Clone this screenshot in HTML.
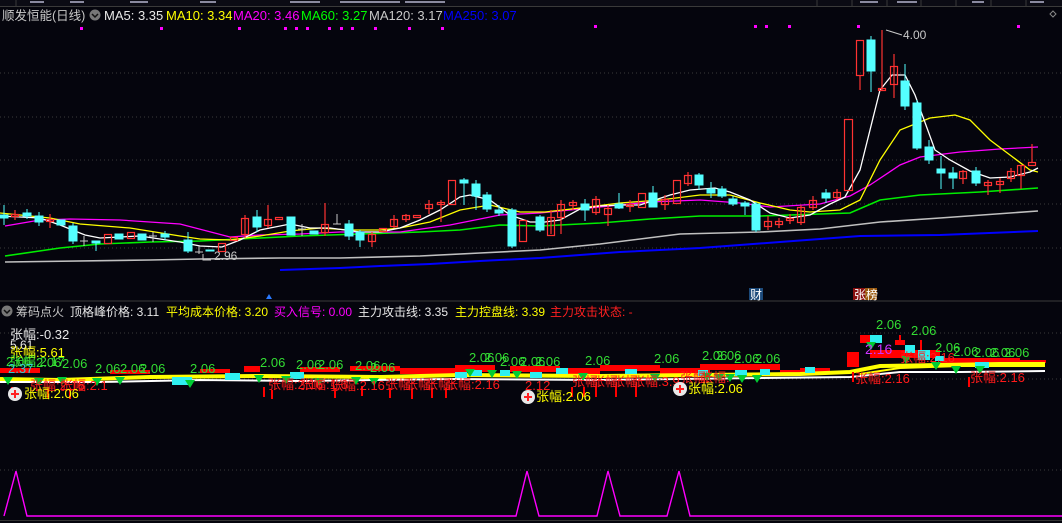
<!DOCTYPE html>
<html><head><meta charset="utf-8"><style>
html,body{margin:0;padding:0;background:#05050d;width:1062px;height:523px;overflow:hidden}
svg{display:block}
text{font-family:"Liberation Sans","Noto Sans CJK SC",sans-serif}
</style></head><body>
<svg width="1062" height="523" viewBox="0 0 1062 523" xmlns="http://www.w3.org/2000/svg">
<rect width="1062" height="523" fill="#05050d"/>
<rect x="0" y="0" width="1062" height="6" fill="#0b0b14"/>
<line x1="0" y1="6.5" x2="1062" y2="6.5" stroke="#3a3a3a"/>
<g stroke="#3a3a3a"><line x1="16" y1="0" x2="16" y2="6"/><line x1="817" y1="0" x2="817" y2="6"/><line x1="852" y1="0" x2="852" y2="6"/><line x1="887" y1="0" x2="887" y2="6"/><line x1="921" y1="0" x2="921" y2="6"/><line x1="956" y1="0" x2="956" y2="6"/><line x1="991" y1="0" x2="991" y2="6"/><line x1="1026" y1="0" x2="1026" y2="6"/></g>
<g fill="#8a8aa0"><rect x="30" y="1" width="14" height="2"/><rect x="70" y="1" width="14" height="2"/><rect x="130" y="1" width="18" height="2"/><rect x="200" y="1" width="16" height="2"/><rect x="290" y="1" width="30" height="2"/><rect x="340" y="1" width="60" height="2"/><rect x="405" y="1" width="40" height="2"/><rect x="860" y="1" width="18" height="2"/><rect x="897" y="1" width="20" height="2"/><rect x="972" y="1" width="12" height="2"/><rect x="1030" y="1" width="14" height="2"/></g>
<path d="M1053 11 l3 3 -3 3 -3 -3z" fill="none" stroke="#888"/>

<text x="2" y="20" font-size="12.5" fill="#c8c8c8">顺发恒能(日线)</text>
<circle cx="95" cy="15" r="5.5" fill="#777"/><path d="M92 14 l3 3 3-3" stroke="#111" stroke-width="1.5" fill="none"/>
<text x="104" y="20" font-size="13" fill="#e8e8e8">MA5: 3.35</text>
<text x="166" y="20" font-size="13" fill="#ffff00">MA10: 3.34</text>
<text x="233" y="20" font-size="13" fill="#ff00ff">MA20: 3.46</text>
<text x="301" y="20" font-size="13" fill="#00ff00">MA60: 3.27</text>
<text x="369" y="20" font-size="13" fill="#c8c8c8">MA120: 3.17</text>
<text x="443" y="20" font-size="13" fill="#0000ff">MA250: 3.07</text>
<g fill="#ff00ff"><rect x="80" y="27" width="3" height="3"/><rect x="160" y="27" width="3" height="3"/><rect x="238" y="27" width="3" height="3"/><rect x="284" y="27" width="3" height="3"/><rect x="295" y="27" width="3" height="3"/><rect x="306" y="27" width="3" height="3"/><rect x="328" y="27" width="3" height="3"/><rect x="340" y="27" width="3" height="3"/><rect x="351" y="27" width="3" height="3"/><rect x="374" y="27" width="3" height="3"/><rect x="408" y="27" width="3" height="3"/><rect x="441" y="27" width="3" height="3"/><rect x="594" y="25" width="3" height="3"/><rect x="754" y="25" width="3" height="3"/><rect x="765" y="25" width="3" height="3"/><rect x="788" y="25" width="3" height="3"/><rect x="857" y="25" width="3" height="3"/><rect x="1017" y="25" width="3" height="3"/></g>

<g stroke="#3a3a3a" stroke-dasharray="1 3"><line x1="0" y1="73" x2="1062" y2="73"/><line x1="0" y1="117" x2="1062" y2="117"/><line x1="0" y1="160" x2="1062" y2="160"/><line x1="0" y1="204" x2="1062" y2="204"/><line x1="0" y1="248" x2="1062" y2="248"/><line x1="0" y1="333" x2="1062" y2="333"/><line x1="0" y1="379" x2="1062" y2="379"/><line x1="0" y1="470" x2="1062" y2="470"/></g>

<g fill="none" stroke-width="1.3">
<polyline stroke="#0000ff" stroke-width="2" points="280,270 340,268 380,266 430,264 480,261 540,258 620,252 700,248 780,242 860,236 940,235 1038,231"/>
<polyline stroke="#c0c0c0" stroke-width="1.6" points="5,262 150,260 200,259 280,258 340,258 420,256 480,253 540,250 600,244 680,234 760,232 820,229 880,222 940,218 1038,211"/>
<polyline stroke="#00ee00" stroke-width="1.6" points="5,256 60,248 100,244 150,242 200,241 240,239 300,236 360,234 420,232 460,230 500,225 540,226 600,223 650,219 700,216 760,216 820,214 850,213 880,200 920,195 980,192 1038,188"/>
<polyline stroke="#ff00ff" points="5,226 40,220 70,219 120,220 180,224 230,237 260,235 300,234 340,232 400,232 450,225 500,215 540,213 560,211 600,207 650,202 700,200 740,203 770,207 820,204 850,196 870,185 900,165 920,157 960,152 1000,149 1038,147"/>
<polyline stroke="#ffff00" points="0,213 50,218 80,224 130,228 180,236 200,239 230,240 260,236 290,231 320,228 350,230 380,230 400,228 430,222 460,210 490,205 520,212 545,212 580,208 620,203 660,200 700,195 730,195 760,203 790,210 810,212 840,210 860,200 880,160 900,130 930,118 955,115 970,120 990,140 1010,155 1030,170 1038,172"/>
<polyline stroke="#ffffff" points="0,216 40,218 60,225 85,235 100,238 140,236 180,242 200,246 222,247 240,240 260,230 290,224 310,228 330,228 360,232 380,232 400,228 420,220 440,210 460,197 470,195 490,200 510,215 530,222 545,222 560,220 580,209 600,206 620,205 640,205 670,195 690,190 715,188 730,192 750,200 770,213 790,218 810,215 830,204 845,197 860,170 880,90 892,75 905,75 915,95 935,150 950,160 970,171 990,178 1010,177 1030,172 1038,168"/>
</g>

<g fill="#54ffff" stroke="#54ffff">
<line x1="4" y1="205" x2="4" y2="225"/><rect x="0" y="215" width="8" height="3"/>
<line x1="27" y1="209" x2="27" y2="219"/><rect x="23" y="213" width="8" height="3"/>
<line x1="39" y1="212" x2="39" y2="226"/><rect x="35" y="216" width="8" height="6"/>
<rect x="57" y="220" width="8" height="5"/>
<line x1="73" y1="223" x2="73" y2="244"/><rect x="69" y="226" width="8" height="15"/>
<line x1="96" y1="241" x2="96" y2="251"/><rect x="92" y="241" width="8" height="2"/>
<rect x="115" y="234" width="8" height="5"/>
<rect x="138" y="234" width="8" height="6"/>
<line x1="165" y1="231" x2="165" y2="240"/><rect x="161" y="234" width="8" height="3"/>
<line x1="188" y1="232" x2="188" y2="253"/><rect x="184" y="240" width="8" height="11"/>
<rect x="206" y="250" width="8" height="1"/>
<line x1="257" y1="210" x2="257" y2="232"/><rect x="253" y="217" width="8" height="10"/>
<rect x="287" y="217" width="8" height="18"/>
<rect x="310" y="231" width="8" height="3"/>
<line x1="349" y1="220" x2="349" y2="240"/><rect x="345" y="224" width="8" height="12"/>
<line x1="360" y1="230" x2="360" y2="247"/><rect x="356" y="232" width="8" height="8"/>
<line x1="464" y1="178" x2="464" y2="205"/><rect x="460" y="180" width="8" height="3"/>
<line x1="476" y1="180" x2="476" y2="210"/><rect x="472" y="184" width="8" height="12"/>
<line x1="487" y1="192" x2="487" y2="212"/><rect x="483" y="195" width="8" height="14"/>
<line x1="499" y1="205" x2="499" y2="216"/><rect x="495" y="210" width="8" height="3"/>
<line x1="512" y1="208" x2="512" y2="248"/><rect x="508" y="210" width="8" height="36"/>
<line x1="540" y1="215" x2="540" y2="232"/><rect x="536" y="217" width="8" height="13"/>
<line x1="585" y1="199" x2="585" y2="221"/><rect x="581" y="204" width="8" height="6"/>
<line x1="619" y1="193" x2="619" y2="209"/><rect x="615" y="204" width="8" height="4"/>
<line x1="653" y1="186" x2="653" y2="207"/><rect x="649" y="193" width="8" height="14"/>
<line x1="699" y1="173" x2="699" y2="190"/><rect x="695" y="175" width="8" height="10"/>
<line x1="711" y1="182" x2="711" y2="198"/><rect x="707" y="189" width="8" height="4"/>
<line x1="722" y1="186" x2="722" y2="198"/><rect x="718" y="189" width="8" height="7"/>
<line x1="733" y1="196" x2="733" y2="206"/><rect x="729" y="199" width="8" height="5"/>
<line x1="745" y1="201" x2="745" y2="215"/><rect x="741" y="203" width="8" height="3"/>
<line x1="756" y1="202" x2="756" y2="232"/><rect x="752" y="204" width="8" height="26"/>
<line x1="826" y1="189" x2="826" y2="203"/><rect x="822" y="193" width="8" height="5"/>
<line x1="871" y1="36" x2="871" y2="92"/><rect x="867" y="40" width="8" height="31"/>
<line x1="905" y1="64" x2="905" y2="110"/><rect x="901" y="81" width="8" height="25"/>
<line x1="917" y1="100" x2="917" y2="150"/><rect x="913" y="103" width="8" height="45"/>
<line x1="929" y1="140" x2="929" y2="164"/><rect x="925" y="147" width="8" height="13"/>
<line x1="941" y1="156" x2="941" y2="189"/><rect x="937" y="169" width="8" height="4"/>
<line x1="953" y1="167" x2="953" y2="189"/><rect x="949" y="173" width="8" height="5"/>
<line x1="976" y1="167" x2="976" y2="186"/><rect x="972" y="171" width="8" height="12"/>
</g>
<g fill="none" stroke="#ff3232" stroke-width="1.2">
<line x1="15" y1="210" x2="15" y2="220"/><rect x="11.5" y="214.5" width="7" height="2"/>
<line x1="50" y1="214" x2="50" y2="228"/><rect x="46.5" y="219.5" width="7" height="2"/>
<rect x="104.5" y="234.5" width="7" height="9"/>
<rect x="127.5" y="232.5" width="7" height="6"/>
<rect x="218.5" y="243.5" width="7" height="8"/>
<rect x="230.5" y="237.5" width="7" height="3"/>
<line x1="245" y1="215" x2="245" y2="238"/><rect x="241.5" y="218.5" width="7" height="16"/>
<line x1="268" y1="205" x2="268" y2="228"/><rect x="264.5" y="219.5" width="7" height="6"/>
<rect x="275.5" y="217.5" width="7" height="2"/>
<line x1="325" y1="203" x2="325" y2="236"/><rect x="321.5" y="224.5" width="7" height="8"/>
<line x1="372" y1="232" x2="372" y2="247"/><rect x="368.5" y="234.5" width="7" height="7"/>
<rect x="379.5" y="228.5" width="7" height="3"/>
<line x1="394" y1="215" x2="394" y2="228"/><rect x="390.5" y="219.5" width="7" height="7"/>
<line x1="406" y1="214" x2="406" y2="222"/><rect x="402.5" y="215.5" width="7" height="4"/>
<rect x="413.5" y="215.5" width="7" height="2"/>
<line x1="429" y1="200" x2="429" y2="214"/><rect x="425.5" y="204.5" width="7" height="4"/>
<line x1="441" y1="200" x2="441" y2="222"/><rect x="437.5" y="202.5" width="7" height="2"/>
<rect x="448.5" y="180.5" width="7" height="24"/>
<rect x="519.5" y="220.5" width="7" height="21"/>
<line x1="551" y1="210" x2="551" y2="234"/><rect x="547.5" y="217.5" width="7" height="18"/>
<line x1="561" y1="200" x2="561" y2="234"/><rect x="557.5" y="204.5" width="7" height="13"/>
<line x1="573" y1="200" x2="573" y2="210"/><rect x="569.5" y="202.5" width="7" height="3"/>
<line x1="596" y1="196" x2="596" y2="215"/><rect x="592.5" y="199.5" width="7" height="13"/>
<line x1="608" y1="205" x2="608" y2="226"/><rect x="604.5" y="208.5" width="7" height="6"/>
<line x1="630" y1="200" x2="630" y2="212"/><rect x="626.5" y="204.5" width="7" height="2"/>
<rect x="638.5" y="193.5" width="7" height="14"/>
<line x1="665" y1="195" x2="665" y2="210"/><rect x="661.5" y="199.5" width="7" height="5"/>
<rect x="673.5" y="180.5" width="7" height="23"/>
<line x1="688" y1="172" x2="688" y2="186"/><rect x="684.5" y="175.5" width="7" height="8"/>
<line x1="768" y1="216" x2="768" y2="230"/><rect x="764.5" y="221.5" width="7" height="5"/>
<line x1="779" y1="218" x2="779" y2="228"/><rect x="775.5" y="221.5" width="7" height="3"/>
<line x1="790" y1="214" x2="790" y2="224"/><rect x="786.5" y="218.5" width="7" height="2"/>
<line x1="801" y1="205" x2="801" y2="225"/><rect x="797.5" y="207.5" width="7" height="15"/>
<line x1="813" y1="196" x2="813" y2="210"/><rect x="809.5" y="200.5" width="7" height="7"/>
<line x1="837" y1="189" x2="837" y2="200"/><rect x="833.5" y="192.5" width="7" height="5"/>
<rect x="844.5" y="119.5" width="8" height="71"/>
<line x1="860" y1="75" x2="860" y2="90"/><rect x="856.5" y="40.5" width="7" height="35"/>
<line x1="882" y1="30" x2="882" y2="90"/><rect x="878.5" y="88.5" width="7" height="2"/>
<line x1="894" y1="54" x2="894" y2="98"/><rect x="890.5" y="66.5" width="7" height="18"/>
<line x1="963" y1="170" x2="963" y2="184"/><rect x="959.5" y="171.5" width="7" height="7"/>
<line x1="988" y1="180" x2="988" y2="195"/><rect x="984.5" y="182.5" width="7" height="3"/>
<line x1="1000" y1="178" x2="1000" y2="193"/><rect x="996.5" y="181.5" width="7" height="3"/>
<line x1="1011" y1="168" x2="1011" y2="182"/><rect x="1007.5" y="171.5" width="7" height="7"/>
<line x1="1021" y1="165" x2="1021" y2="189"/><rect x="1017.5" y="165.5" width="7" height="10"/>
<line x1="1032" y1="144" x2="1032" y2="162"/><rect x="1028.5" y="162.5" width="7" height="3"/>
</g>
<g stroke="#c8c8c8"><path d="M80 241h8M84 236v10"/><path d="M149 236h8M153 232v10"/><path d="M195 252h8M199 246v8"/><path d="M298 229h8M302 224v12"/><path d="M333 224h8M337 214v10"/></g>
<path d="M203 254v6h8" stroke="#c8c8c8" fill="none"/>
<text x="214" y="260" font-size="12" fill="#c8c8c8">2.96</text>
<path d="M886 30l16 5" stroke="#c8c8c8"/>
<text x="903" y="39" font-size="12" fill="#c8c8c8">4.00</text>

<rect x="749" y="288" width="14" height="12" fill="#1c4a7a"/>
<text x="750" y="299" font-size="12" fill="#fff">财</text>
<rect x="853" y="288" width="12" height="12" fill="#8a1010"/><rect x="865" y="288" width="12" height="12" fill="#9a5a10"/>
<text x="854" y="299" font-size="12" fill="#fff">张榜</text>

<line x1="0" y1="301" x2="1062" y2="301" stroke="#3a3a3a"/>
<path d="M266 299l3-5 3 5z" fill="#2a7aff"/>
<circle cx="7" cy="311" r="5.5" fill="#777"/><path d="M4 310 l3 3 3-3" stroke="#111" stroke-width="1.5" fill="none"/>
<text x="16" y="316" font-size="12" fill="#c8c8c8">筹码点火</text>
<text x="70" y="316" font-size="12" fill="#e8e8e8">顶格峰价格: 3.11</text>
<text x="166" y="316" font-size="12" fill="#ffff00">平均成本价格: 3.20</text>
<text x="274" y="316" font-size="12" fill="#ff00ff">买入信号: 0.00</text>
<text x="358" y="316" font-size="12" fill="#e8e8e8">主力攻击线: 3.35</text>
<text x="455" y="316" font-size="12" fill="#ffff00">主力控盘线: 3.39</text>
<text x="550" y="316" font-size="12" fill="#ff2020">主力攻击状态: -</text>

<g fill="#ff0000">
<rect x="0" y="368" width="40" height="5"/><rect x="110" y="370" width="40" height="4"/><rect x="200" y="369" width="30" height="4"/>
<rect x="244" y="366" width="16" height="6"/><rect x="300" y="367" width="40" height="5"/><rect x="350" y="366" width="50" height="5"/>
<rect x="400" y="368" width="60" height="6"/><rect x="455" y="365" width="40" height="7"/><rect x="510" y="366" width="50" height="6"/>
<rect x="560" y="368" width="40" height="6"/><rect x="600" y="365" width="60" height="6"/><rect x="660" y="368" width="50" height="6"/>
<rect x="700" y="364" width="80" height="6"/><rect x="780" y="370" width="40" height="5"/><rect x="800" y="368" width="30" height="6"/>
<rect x="847" y="352" width="12" height="15"/><rect x="860" y="335" width="12" height="8"/><rect x="895" y="340" width="10" height="5"/>
<rect x="870" y="350" width="70" height="8"/><rect x="940" y="358" width="80" height="5"/><rect x="1020" y="360" width="26" height="3"/>
</g>
<polyline points="0,379 60,380 150,377 260,376 380,377 460,375 600,376 700,375 800,374 850,372 880,366 940,365 1000,364 1045,364" fill="none" stroke="#ffff00" stroke-width="4"/>
<polyline points="0,382 100,382 200,380 300,381 450,379 600,380 760,378 850,377 900,372 960,372 1045,371" fill="none" stroke="#ffffff" stroke-width="2"/>
<polyline points="860,374 900,368 960,366 1045,366" fill="none" stroke="#ffff00" stroke-width="2"/>
<g fill="#2ef0f0"><rect x="172" y="377" width="20" height="8"/><rect x="225" y="373" width="15" height="7"/><rect x="290" y="372" width="14" height="7"/><rect x="455" y="372" width="12" height="6"/><rect x="470" y="370" width="12" height="6"/><rect x="500" y="370" width="10" height="6"/><rect x="530" y="372" width="12" height="6"/><rect x="556" y="368" width="12" height="6"/><rect x="625" y="369" width="12" height="5"/><rect x="698" y="370" width="10" height="6"/><rect x="735" y="370" width="12" height="6"/><rect x="760" y="369" width="10" height="6"/><rect x="805" y="367" width="10" height="6"/><rect x="870" y="335" width="12" height="8"/><rect x="905" y="345" width="10" height="8"/><rect x="918" y="350" width="12" height="10"/><rect x="935" y="356" width="10" height="5"/><rect x="975" y="362" width="14" height="6"/></g>
<g fill="#00cc33">
<path d="M3 377h10l-5 8z"/><path d="M34 378h10l-5 8z"/><path d="M57 377h10l-5 8z"/><path d="M92 378h10l-5 8z"/><path d="M115 377h10l-5 8z"/><path d="M185 380h10l-5 8z"/><path d="M254 375h10l-5 8z"/><path d="M281 376h10l-5 8z"/><path d="M314 378h10l-5 8z"/><path d="M351 377h10l-5 8z"/><path d="M369 378h10l-5 8z"/><path d="M465 369h10l-5 8z"/><path d="M487 370h10l-5 8z"/><path d="M512 371h10l-5 8z"/><path d="M578 373h10l-5 8z"/><path d="M650 374h10l-5 8z"/><path d="M702 373h10l-5 8z"/><path d="M714 374h10l-5 8z"/><path d="M725 374h10l-5 8z"/><path d="M737 375h10l-5 8z"/><path d="M752 375h10l-5 8z"/><path d="M866 342h10l-5 8z"/><path d="M901 356h10l-5 8z"/><path d="M931 362h10l-5 8z"/><path d="M951 366h10l-5 8z"/><path d="M975 366h10l-5 8z"/>
</g>
<g stroke="#ff0000" stroke-width="2" fill="#ff0000">
<path d="M12 397v-10"/><path d="M48 398v-10"/><path d="M70 399v-10"/><path d="M264 397v-10"/><path d="M272 399v-9"/><path d="M335 398v-10"/><path d="M362 396v-10"/><path d="M390 398v-10"/><path d="M412 399v-10"/><path d="M432 398v-10"/><path d="M446 398v-10"/><path d="M572 397v-10"/><path d="M584 397v-10"/><path d="M596 397v-10"/><path d="M616 397v-10"/><path d="M636 397v-10"/><path d="M853 382v-10"/><path d="M969 387v-10"/><path d="M900 345v-10"/><path d="M921 350v-10"/>
</g>
<g font-size="13" fill="#ff1a1a">
<text x="30" y="390">张幅:2.16</text><text x="60" y="390">张幅:2.1</text>
<text x="268" y="389">张幅:2.16</text><text x="300" y="389">张幅:1.6</text><text x="330" y="390">张幅:2.16</text>
<text x="385" y="389">张幅:</text><text x="405" y="389">张幅:</text><text x="425" y="389">张幅:</text><text x="445" y="389">张幅:2.16</text>
<text x="525" y="390">2.12</text><text x="572" y="386">张幅:</text><text x="592" y="386">张幅:</text><text x="612" y="386">张幅:</text><text x="632" y="386">张幅:3.9</text>
<text x="680" y="382">张幅:</text><text x="700" y="382">张幅:</text>
<text x="855" y="383">张幅:2.16</text><text x="900" y="362">张幅:2.16</text><text x="970" y="382">张幅:2.16</text>
</g>
<text x="865" y="354" font-size="14" fill="#cc33ff">2.16</text>
<g font-size="13" fill="#33dd33">
<text x="6" y="366">2.06</text><text x="36" y="367">2.06</text><text x="62" y="368">2.06</text><text x="95" y="373">2.06</text><text x="120" y="373">2.06</text><text x="140" y="373">2.06</text><text x="190" y="373">2.06</text>
<text x="260" y="367">2.06</text><text x="296" y="369">2.06</text><text x="318" y="369">2.06</text><text x="355" y="370">2.06</text><text x="370" y="372">2.06</text>
<text x="469" y="362">2.06</text><text x="484" y="362">2.06</text><text x="500" y="366">2.06</text><text x="520" y="366">2.06</text><text x="535" y="366">2.06</text><text x="585" y="365">2.06</text><text x="654" y="363">2.06</text>
<text x="702" y="360">2.06</text><text x="716" y="360">2.06</text><text x="734" y="363">2.06</text><text x="755" y="363">2.06</text>
<text x="876" y="329">2.06</text><text x="911" y="335">2.06</text><text x="935" y="352">2.06</text><text x="953" y="356">2.06</text><text x="974" y="357">2.06</text><text x="990" y="357">2.06</text><text x="1004" y="357">2.06</text>
</g>
<text x="10" y="339" font-size="13" fill="#e8e8e8">张幅:-0.32</text>
<text x="10" y="349" font-size="12" fill="#e8e8e8">5.61</text>
<text x="10" y="357" font-size="13" fill="#ffff00">张幅:5.61</text>
<text x="10" y="366" font-size="13" fill="#33dd33">张幅:2.17</text>
<text x="8" y="373" font-size="13" fill="#33cccc">2.37</text>
<g><circle cx="15" cy="394" r="7" fill="#e8e8e8"/><path d="M11 394h8M15 390v8" stroke="#ff2020" stroke-width="2"/></g>
<text x="24" y="398" font-size="13" fill="#ffff00">张幅:2.06</text>
<g><circle cx="528" cy="397" r="7" fill="#e8e8e8"/><path d="M524 397h8M528 393v8" stroke="#ff2020" stroke-width="2"/></g>
<text x="536" y="401" font-size="13" fill="#ffff00">张幅:2.06</text>
<g><circle cx="680" cy="389" r="7" fill="#e8e8e8"/><path d="M676 389h8M680 385v8" stroke="#ff2020" stroke-width="2"/></g>
<text x="688" y="393" font-size="13" fill="#ffff00">张幅:2.06</text>

<polyline points="4,516 16,471 27,516 516,516 527,471 539,516 597,516 608,471 620,516 667,516 679,471 690,516 1062,516" fill="none" stroke="#ff00ff" stroke-width="1.4"/>
<line x1="0" y1="520.5" x2="1062" y2="520.5" stroke="#333"/>
</svg>
</body></html>
